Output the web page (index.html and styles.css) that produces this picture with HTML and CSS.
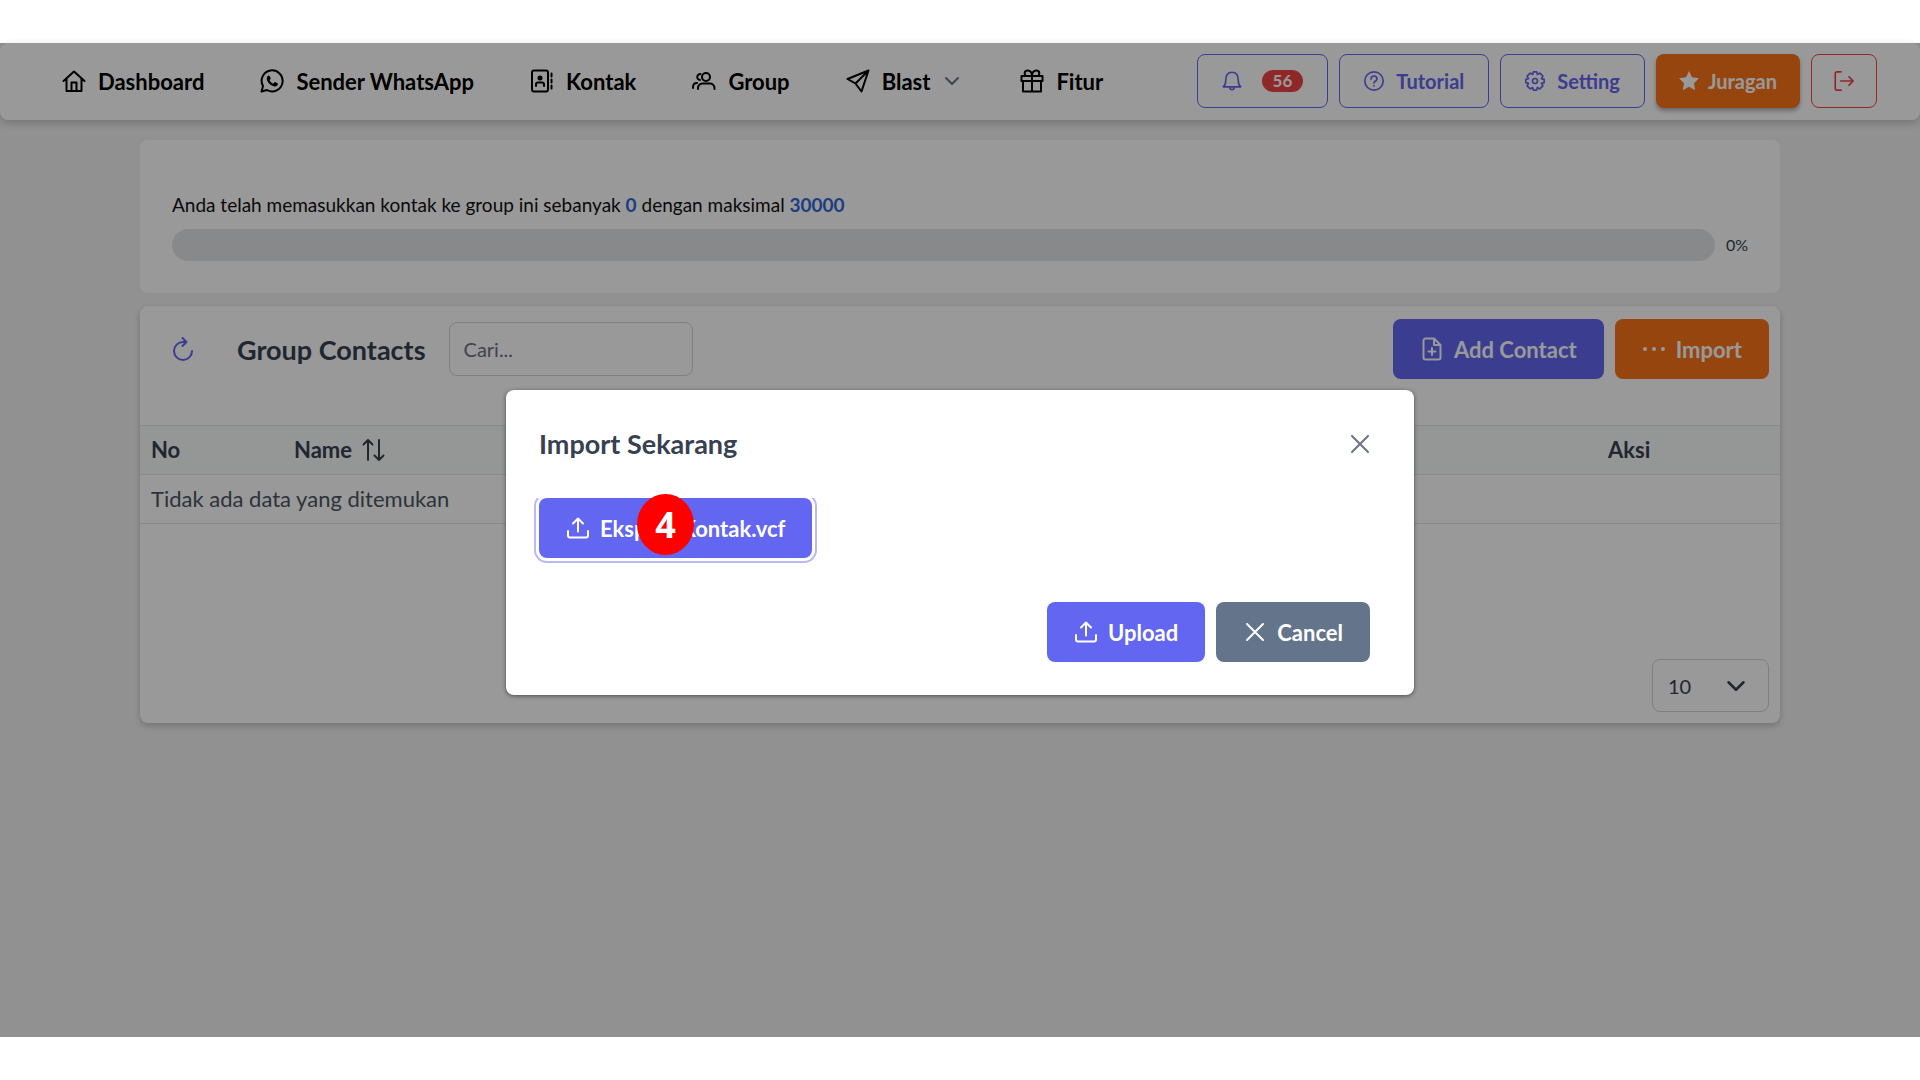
FILE: index.html
```html
<!DOCTYPE html>
<html lang="id">
<head>
<meta charset="utf-8">
<meta name="viewport" content="width=device-width, initial-scale=1">
<title>Group Contacts</title>
<link rel="stylesheet" href="styles.css">
</head>
<body>
<svg class="sprite" aria-hidden="true">
  <symbol id="upload" viewBox="0 0 24 24"><path d="M12 15.500V2.500M7 7.500l5-5 5 5M2 15v4.500a2 2 0 0 0 2 2h16a2 2 0 0 0 2-2V15"/></symbol>
  <symbol id="times" viewBox="0 0 24 24"><path d="M4 4l16 16M20 4L4 20"/></symbol>
  <symbol id="chevron" viewBox="0 0 24 24"><path d="M3 7.500l9 9 9-9"/></symbol>
</svg>
<div class="screen">
  <header class="topbar">
    <nav class="menu">
      <a class="menu-item" href="#"><svg class="icon" viewBox="0 0 24 24"><path d="M1.500 12L12 2.500 22.500 12M4.500 9.500V22h15V9.500M9.500 22v-8.500h5V22"/></svg>Dashboard</a>
      <a class="menu-item" href="#"><svg class="icon" viewBox="0 0 24 24"><path d="M1.500 22.500L3 17A10.500 10.500 0 1 1 7 21z"/><path class="solid" d="M8.600 6.600c-.5 0-1.900 1-1.900 2.900 0 3.800 5 8 8.300 8 1.800 0 2.900-1.300 2.900-2.800 0-.5-2.500-1.700-3-1.700-.6 0-1 1.500-1.600 1.500-1 0-3.700-2.500-3.700-3.300 0-.5 1.100-1 1.100-1.700 0-.5-1-2.900-2.100-2.900z"/></svg>Sender WhatsApp</a>
      <a class="menu-item" href="#"><svg class="icon" viewBox="0 0 24 24"><rect x="2" y="1.500" width="16" height="21" rx="2"/><path d="M21.500 4.500v3M21.500 10.500v3M21.500 16.500v3M6 17v-1.500a2 2 0 0 1 2-2h4a2 2 0 0 1 2 2V17"/><circle class="solid" cx="10" cy="9" r="2.500"/></svg>Kontak</a>
      <a class="menu-item" href="#"><svg class="icon" viewBox="0 0 24 24"><circle cx="14" cy="8" r="4"/><path d="M6 20v-1a4.500 4.500 0 0 1 4.500-4.500h7A4.500 4.500 0 0 1 22.500 19v1M8.500 5A3 3 0 1 0 8 11M1 19v-1.500A4 4 0 0 1 5 14"/></svg>Group</a>
      <a class="menu-item" href="#"><svg class="icon" viewBox="0 0 24 24"><path d="M1.500 10L22.500 1.500 15.500 22.500 9.500 14.500zM22.500 1.500L9.500 14.500"/></svg>Blast<svg class="icon caret"><use href="#chevron"/></svg></a>
      <a class="menu-item" href="#"><svg class="icon" viewBox="0 0 24 24"><path d="M1.500 7h21v5h-21zM3 12v10.500h18V12M12 7v15.500M12 7H7.500C3.500 7 4 1.500 7.500 1.500S12 4 12 7zM12 7h4.500c4 0 3.500-5.500 0-5.500S12 4 12 7z"/></svg>Fitur</a>
    </nav>
    <div class="actions">
      <button class="button outlined notify" type="button" aria-label="Notifications"><svg class="icon small" viewBox="0 0 24 24"><path d="M1.500 19h21c-2.500-2-3-4-3-8 0-5.500-2.500-9.500-7.500-9.500s-7.500 4-7.500 9.500c0 4-.5 6-3 8zM9.500 19.500c0 4 5 4 5 0"/></svg><span class="count">56</span></button>
      <button class="button outlined" type="button"><svg class="icon small" viewBox="0 0 24 24"><circle cx="12" cy="12" r="11"/><path d="M8.500 9.500c0-4.700 7-4.700 7 0 0 2.500-3.500 2.500-3.500 5M12 17.500v.5"/></svg>Tutorial</button>
      <button class="button outlined" type="button"><svg class="icon small" viewBox="0 0 24 24"><path d="M10 1h4l.8 3.200 3-1.700 3.700 3.700-1.700 3 3.200.8v4l-3.200.8 1.700 3-3.700 3.700-3-1.700-.8 3.200h-4l-.8-3.200-3 1.700-3.700-3.700 1.700-3L1 14v-4l3.200-.8-1.700-3 3.700-3.700 3 1.700z"/><circle cx="12" cy="12" r="3"/></svg>Setting</button>
      <button class="button warning raised" type="button"><svg class="icon small" viewBox="0 0 24 24"><path class="solid" d="M12 0l3.600 7.500 8.400 1.200-6 5.900 1.400 8.400L12 19l-7.400 4L6 14.600 0 8.700l8.400-1.200z"/></svg>Juragan</button>
      <button class="button outlined danger" type="button" aria-label="Logout"><svg class="icon small" viewBox="0 0 24 24"><path d="M8.500 1H3.500A2 2 0 0 0 1.500 3v18a2 2 0 0 0 2 2h5M8 12h15M18 7l5 5-5 5"/></svg></button>
    </div>
  </header>

  <main class="content">
    <section class="card quota">
      <p class="quota-text" id="quota">Anda telah memasukkan kontak ke group ini sebanyak <b>0</b> dengan maksimal <b>30000</b></p>
      <div class="quota-row">
        <div class="bar" role="progressbar" aria-labelledby="quota" aria-valuenow="0"></div>
        <span class="percent">0%</span>
      </div>
    </section>

    <section class="card contacts">
      <div class="toolbar">
        <button class="refresh" type="button" aria-label="Refresh"><svg class="icon" viewBox="0 0 24 24"><path d="M12 5a9 9 0 1 0 9 9M12 5h3M11.500 1l4 4-4 4"/></svg></button>
        <h1 class="heading">Group Contacts</h1>
        <input class="search" type="text" placeholder="Cari..." aria-label="Cari">
        <div class="toolbar-end">
          <button class="button primary large" type="button"><svg class="icon" viewBox="0 0 24 24"><path d="M14 1.500H5.500a2 2 0 0 0-2 2v17a2 2 0 0 0 2 2h13a2 2 0 0 0 2-2V8zM14 1.500V8h6.500M12 11v7M8.500 14.500h7"/></svg>Add Contact</button>
          <button class="button warning large" type="button"><svg class="icon" viewBox="0 0 24 24"><g class="solid"><circle cx="3" cy="12" r="2"/><circle cx="12" cy="12" r="2"/><circle cx="21" cy="12" r="2"/></g></svg>Import</button>
        </div>
      </div>
      <table class="table">
        <thead><tr><th class="col-no">No</th><th class="col-name"><span class="sortable">Name<svg class="icon" viewBox="0 0 24 24"><path d="M7 22V2M2.500 6.500L7 2l4.500 4.500M18 2v20M13.500 17.500L18 22l4.500-4.500"/></svg></span></th><th>Aksi</th></tr></thead>
        <tbody><tr><td colspan="3">Tidak ada data yang ditemukan</td></tr></tbody>
      </table>
      <div class="paginator">
        <div class="select-wrap">
          <select class="select" aria-label="Rows per page"><option>10</option></select>
          <svg class="icon select-caret"><use href="#chevron"/></svg>
        </div>
      </div>
    </section>
  </main>

  <div class="overlay">
    <div class="modal" role="dialog" aria-modal="true" aria-labelledby="modal-title">
      <div class="modal-head">
        <h2 class="modal-title" id="modal-title">Import Sekarang</h2>
        <button class="close" type="button" aria-label="Close"><svg class="icon"><use href="#times"/></svg></button>
      </div>
      <div class="modal-body">
        <button class="button primary large focused" type="button"><svg class="icon"><use href="#upload"/></svg>Eksport Kontak.vcf</button>
      </div>
      <div class="modal-foot">
        <button class="button primary large" type="button"><svg class="icon"><use href="#upload"/></svg>Upload</button>
        <button class="button secondary large" type="button"><svg class="icon"><use href="#times"/></svg>Cancel</button>
      </div>
      <span class="step">4</span>
    </div>
  </div>
</div>
</body>
</html>
```
FILE: styles.css
```css
* { box-sizing: border-box; }

body {
  display: flex;
  flex-direction: column;
  min-height: 100vh;
  margin: 0;
  padding: 43px 0;
  background: #fff;
  color: #374151;
  font-family: Lato, "Liberation Sans", sans-serif;
  font-size: 22px;
}

button, input, select { font: inherit; }
h1, h2, p { margin: 0; }
.sprite { display: none; }

.icon {
  flex: none;
  width: 24px;
  height: 24px;
  fill: none;
  stroke: currentColor;
  stroke-width: 2;
  stroke-linecap: round;
  stroke-linejoin: round;
}
.icon.small { width: 20px; height: 20px; overflow: visible; }
.solid { fill: currentColor; stroke: none; }

.screen {
  position: relative;
  flex: 1;
  background: #f2f2f4;
}

/* Top bar */
.topbar {
  display: flex;
  align-items: center;
  justify-content: space-between;
  padding: 11px 43px 12px 62px;
  border-radius: 8px;
  background: #fff;
  box-shadow: 0 3px 8px rgba(0, 0, 0, .2);
}
.menu { display: flex; gap: 56px; }
.menu-item {
  display: flex;
  align-items: center;
  gap: 12px;
  color: #000;
  font-size: 22px;
  font-weight: 700;
  text-decoration: none;
}
.menu-item .caret {
  width: 16px;
  height: 16px;
  margin: 0 4px 0 2px;
  color: #6b7280;
  stroke-width: 3;
}
.actions { display: flex; gap: 11px; }

.button {
  display: inline-flex;
  align-items: center;
  justify-content: center;
  gap: 12px;
  height: 54px;
  padding: 0 24px;
  border: 1px solid transparent;
  border-radius: 8px;
  color: #fff;
  font-size: 20px;
  font-weight: 700;
}
.button.large { gap: 10px; height: 60px; padding: 0 26px; font-size: 22px; }
.outlined { border-color: currentColor; background: transparent; color: #6366f1; }
.outlined.danger { padding: 0 22px; color: #ef4444; }
.primary { background: #6366f1; }
.warning { background: #f97316; }
.secondary { background: #64748b; }
.raised { gap: 9px; padding: 0 22px; box-shadow: 0 3px 4px rgba(0, 0, 0, .3); }
.notify { gap: 20px; }
.count {
  padding: 0 11px;
  border-radius: 12px;
  background: #ef4444;
  color: #fff;
  font-size: 17px;
  line-height: 22px;
}

/* Page content */
.content {
  display: grid;
  gap: 13px;
  padding: 20px 140px;
}
.card {
  border-radius: 8px;
  background: #fff;
}
.quota { padding: 51px 32px 32px; }
.quota-text {
  color: #111;
  font-size: 19px;
  line-height: 28px;
}
.quota-text b { color: #2f66d6; }
.quota-row {
  display: flex;
  align-items: center;
  gap: 11px;
  margin-top: 10px;
}
.bar {
  flex: 1;
  height: 32px;
  border-radius: 16px;
  background: #e3e5e7;
}
.percent { font-size: 16px; line-height: 24px; }

.contacts { box-shadow: 0 3px 6px rgba(0, 0, 0, .2); }
.toolbar {
  display: flex;
  align-items: center;
  padding: 13px 11px 46px 0;
}
.refresh {
  display: flex;
  justify-content: center;
  width: 86px;
  padding: 0;
  border: 0;
  background: none;
  color: #6366f1;
}
.heading {
  margin-left: 11px;
  font-size: 27px;
  font-weight: 700;
}
.search {
  width: 244px;
  height: 54px;
  margin-left: 23px;
  padding: 0 14px;
  border: 1px solid #d1d5db;
  border-radius: 8px;
  color: inherit;
  font-size: 20px;
}
.search::placeholder { color: #6b7280; }
.toolbar-end {
  display: flex;
  gap: 11px;
  margin-left: auto;
}

.table {
  width: 100%;
  border-collapse: collapse;
  text-align: left;
  line-height: 26px;
}
.table th, .table td {
  padding: 11px;
  border-bottom: 1px solid #e5e7eb;
}
.table th { border-top: 1px solid #e5e7eb; background: #f9fafb; font-weight: 700; }
.table td { color: #4b5563; }
.col-no { width: 143px; }
.col-name { width: 1314px; }
.sortable { display: flex; align-items: center; gap: 9px; }

.paginator {
  display: flex;
  justify-content: flex-end;
  padding: 135px 11px 11px;
}
.select-wrap { position: relative; }
.select {
  width: 117px;
  height: 53px;
  padding: 0 15px;
  border: 1px solid #d1d5db;
  border-radius: 8px;
  background: #fff;
  color: #374151;
  font-size: 20px;
  appearance: none;
}
.select-caret {
  position: absolute;
  top: 17px;
  right: 23px;
  width: 20px;
  height: 20px;
  stroke-width: 3;
  pointer-events: none;
}

/* Import dialog */
.overlay {
  position: absolute;
  inset: 0;
  display: flex;
  align-items: center;
  justify-content: center;
  padding-top: 5px;
  background: rgba(0, 0, 0, .4);
}
.modal {
  position: relative;
  width: 90%;
  max-width: 908px;
  border-radius: 8px;
  background: #fff;
  box-shadow: 0 1px 4px rgba(0, 0, 0, .5);
}
.modal-head {
  display: flex;
  align-items: center;
  justify-content: space-between;
  padding: 33px 42px 33px 33px;
}
.modal-title { font-size: 27px; font-weight: 700; line-height: 42px; }
.close {
  display: flex;
  padding: 0;
  border: 0;
  background: none;
  color: #6b7280;
}
.modal-body { display: flex; padding: 0 33px 44px; overflow: hidden; }
.focused { box-shadow: 0 0 0 3px #fff, 0 0 0 5px #b9b9f5; }
.step {
  position: absolute;
  top: 104px;
  left: 131px;
  width: 57px;
  height: 61px;
  border-radius: 50%;
  background: #f00;
  color: #fff;
  font: 700 36px/61px "Open Sans", sans-serif;
  text-align: center;
}
.modal-foot {
  display: flex;
  justify-content: flex-end;
  gap: 11px;
  padding: 0 44px 33px;
}
```
